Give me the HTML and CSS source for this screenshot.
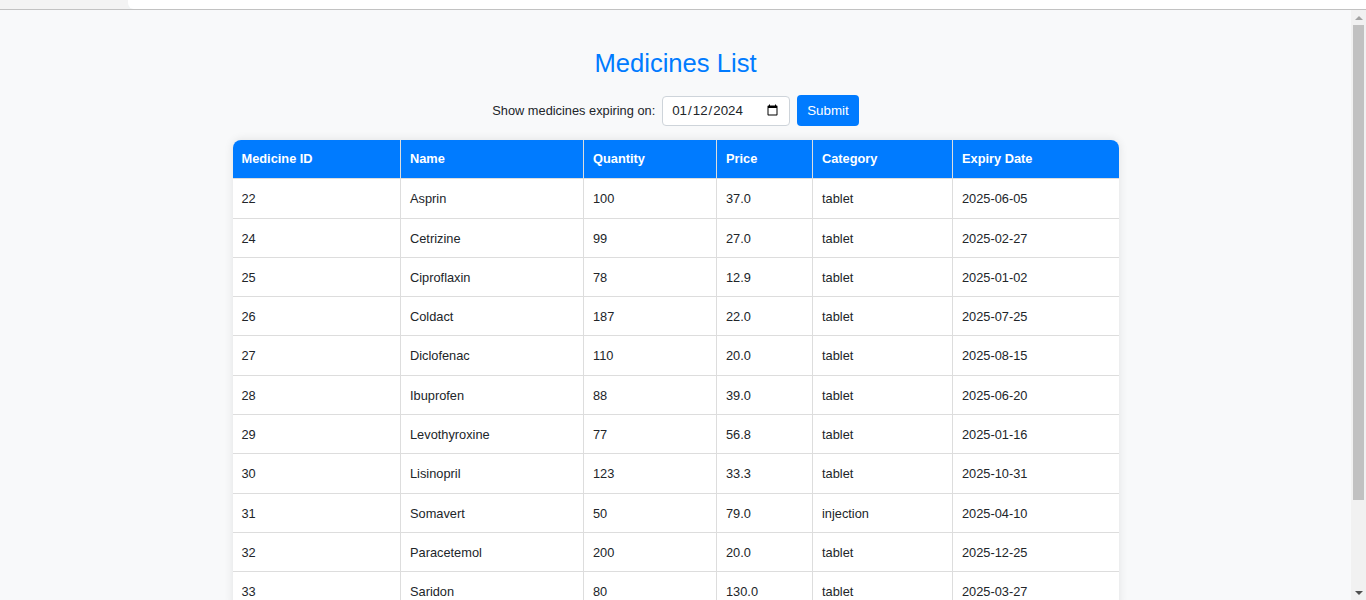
FILE: index.html
```html
<!DOCTYPE html>
<html lang="en">
<head>
<meta charset="utf-8">
<title>Medicines List</title>
<link rel="stylesheet" href="styles.css">
</head>
<body>
<div class="chrome">
  <div class="chrome-left"></div>
  <div class="chrome-tab"></div>
</div>
<div class="viewport">
  <main class="content">
    <h1 class="title">Medicines List</h1>
    <form class="filter">
      <label class="filter-label" for="expiry">Show medicines expiring on:</label>
      <input class="date-input" type="date" id="expiry" value="2024-01-12">
      <button class="submit-btn" type="button">Submit</button>
    </form>
    <div class="table-wrap">
      <table class="med-table">
        <thead>
          <tr>
            <th class="c-id">Medicine ID</th>
            <th class="c-name">Name</th>
            <th class="c-qty">Quantity</th>
            <th class="c-price">Price</th>
            <th class="c-cat">Category</th>
            <th class="c-exp">Expiry Date</th>
          </tr>
        </thead>
        <tbody>
          <tr><td>22</td><td>Asprin</td><td>100</td><td>37.0</td><td>tablet</td><td>2025-06-05</td></tr>
          <tr><td>24</td><td>Cetrizine</td><td>99</td><td>27.0</td><td>tablet</td><td>2025-02-27</td></tr>
          <tr><td>25</td><td>Ciproflaxin</td><td>78</td><td>12.9</td><td>tablet</td><td>2025-01-02</td></tr>
          <tr><td>26</td><td>Coldact</td><td>187</td><td>22.0</td><td>tablet</td><td>2025-07-25</td></tr>
          <tr><td>27</td><td>Diclofenac</td><td>110</td><td>20.0</td><td>tablet</td><td>2025-08-15</td></tr>
          <tr><td>28</td><td>Ibuprofen</td><td>88</td><td>39.0</td><td>tablet</td><td>2025-06-20</td></tr>
          <tr><td>29</td><td>Levothyroxine</td><td>77</td><td>56.8</td><td>tablet</td><td>2025-01-16</td></tr>
          <tr><td>30</td><td>Lisinopril</td><td>123</td><td>33.3</td><td>tablet</td><td>2025-10-31</td></tr>
          <tr><td>31</td><td>Somavert</td><td>50</td><td>79.0</td><td>injection</td><td>2025-04-10</td></tr>
          <tr><td>32</td><td>Paracetemol</td><td>200</td><td>20.0</td><td>tablet</td><td>2025-12-25</td></tr>
          <tr><td>33</td><td>Saridon</td><td>80</td><td>130.0</td><td>tablet</td><td>2025-03-27</td></tr>
        </tbody>
      </table>
    </div>
  </main>
  <div class="scrollbar">
    <div class="sb-arrow sb-up"></div>
    <div class="sb-track"><div class="sb-thumb"></div></div>
    <div class="sb-arrow sb-down"></div>
  </div>
</div>
</body>
</html>
```

FILE: styles.css
```css
html, body {
  margin: 0;
  padding: 0;
  height: 600px;
  overflow: hidden;
}
body {
  font-family: "Liberation Sans", Arial, sans-serif;
  font-size: 12.8px;
  color: #212529;
  background: #f8f9fa;
}
.chrome {
  display: flex;
  height: 9px;
  border-bottom: 1px solid #c2c2c2;
  background: #f1f3f4;
}
.chrome-left {
  width: 128px;
  background: #f3f3f3;
}
.chrome-tab {
  flex: 1;
  background: #ffffff;
  border-bottom-left-radius: 6px;
}
.viewport {
  display: flex;
  height: 590px;
  overflow: hidden;
}
.content {
  flex: 1;
  display: flex;
  flex-direction: column;
  align-items: center;
  padding-top: 39px;
}
.title {
  margin: 0;
  font-size: 25.6px;
  line-height: 29px;
  font-weight: normal;
  color: #007bff;
}
.filter {
  display: flex;
  align-items: center;
  gap: 7px;
  margin-top: 17px;
  height: 31px;
}
.filter-label {
  font-size: 12.8px;
  color: #212529;
}
.date-input {
  box-sizing: border-box;
  width: 128px;
  height: 30px;
  padding: 0 8px 0 8px;
  border: 1px solid #ced4da;
  border-radius: 4px;
  background: #fff;
  font-family: "Liberation Sans", Arial, sans-serif;
  font-size: 13.33px;
  color: #212529;
}
.submit-btn {
  box-sizing: border-box;
  height: 31px;
  padding: 0 10px;
  border: none;
  border-radius: 4px;
  background: #007bff;
  color: #fff;
  font-family: "Liberation Sans", Arial, sans-serif;
  font-size: 13.33px;
}
.table-wrap {
  margin-top: 14px;
  width: 886px;
  border-radius: 8px;
  overflow: hidden;
  background: #fff;
  box-shadow: 0 0 10px rgba(0, 0, 0, 0.1);
  flex-shrink: 0;
}
.med-table {
  width: 100%;
  border-collapse: collapse;
  table-layout: fixed;
}
.med-table th,
.med-table td {
  box-sizing: border-box;
  padding: 12px 9px;
  line-height: 14.3px;
  text-align: left;
  border: 1px solid #dddddd;
}
.med-table td {
  padding-top: 13px;
  padding-bottom: 11px;
  color: #212529;
}
.med-table tr > :first-child { border-left: none; }
.med-table tr > :last-child { border-right: none; }
.med-table th {
  background: #007bff;
  color: #fff;
  font-weight: bold;
  border-top: none;
  border-bottom: none;
}
.c-id { width: 168px; }
.c-name { width: 183px; }
.c-qty { width: 133px; }
.c-price { width: 96px; }
.c-cat { width: 140px; }
.c-exp { width: 166px; }

.scrollbar {
  width: 15px;
  display: flex;
  flex-direction: column;
  background: #f1f1f1;
}
.sb-arrow {
  height: 15px;
  display: flex;
  align-items: center;
  justify-content: center;
}
.sb-up::before {
  content: "";
  border-left: 4px solid transparent;
  border-right: 4px solid transparent;
  border-bottom: 4px solid #a3a3a3;
}
.sb-down::before {
  content: "";
  border-left: 4px solid transparent;
  border-right: 4px solid transparent;
  border-top: 4px solid #505050;
}
.sb-track {
  flex: 1;
  padding: 0 2px;
}
.sb-thumb {
  height: 475px;
  background: #c1c1c1;
}
```
